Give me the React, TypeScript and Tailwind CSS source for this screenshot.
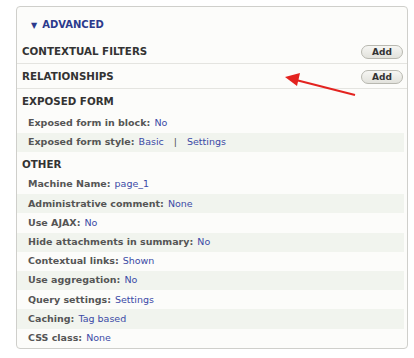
import React from "react";

const font = { fontFamily: '"DejaVu Sans", Verdana, sans-serif' };

type Row = { label: string; value: React.ReactNode };

function Heading({ title, add, border }: { title: string; add?: boolean; border?: boolean }) {
  return (
    <div
      className={`flex items-center justify-between pl-[5px] pr-[4px] pt-[2px] ${border ? "h-[25px] border-b border-[#e4e4e0]" : "h-[24px]"}`}
    >
      <span className="text-[10.3px] font-bold text-[#333]">{title}</span>
      {add && (
        <button className="h-[14px] w-[42px] rounded-full border border-[#b8b8b0] bg-gradient-to-b from-[#f6f6f3] to-[#e2e2dc] text-[9px] font-bold leading-none text-[#333] flex items-center justify-center">
          Add
        </button>
      )}
    </div>
  );
}

function Rows({ rows, h }: { rows: Row[]; h: string }) {
  return (
    <div className="flex flex-col pr-[3px]">
      {rows.map((r, i) => (
        <div
          key={r.label}
          className={`${h} flex items-center pl-[11px] text-[9.5px] ${i % 2 === 1 ? "bg-[#f1f4ee]" : ""}`}
        >
          <span className="font-bold text-[#555]">{r.label}:</span>
          <span className="ml-[4px] text-[#3b4aa6]">{r.value}</span>
        </div>
      ))}
    </div>
  );
}

export default function App() {
  const exposed: Row[] = [
    { label: "Exposed form in block", value: "No" },
    {
      label: "Exposed form style",
      value: (
        <>
          Basic<span className="text-[#555] mx-[10px]">|</span>Settings
        </>
      ),
    },
  ];
  const other: Row[] = [
    { label: "Machine Name", value: "page_1" },
    { label: "Administrative comment", value: "None" },
    { label: "Use AJAX", value: "No" },
    { label: "Hide attachments in summary", value: "No" },
    { label: "Contextual links", value: "Shown" },
    { label: "Use aggregation", value: "No" },
    { label: "Query settings", value: "Settings" },
    { label: "Caching", value: "Tag based" },
    { label: "CSS class", value: "None" },
  ];

  return (
    <div className="w-[414px] h-[358px] bg-white pt-[6px] pl-[16px] pr-[6px] relative" style={font}>
      <div className="h-[343px] rounded-[4px] border border-[#cfcfcb] bg-[#fcfcfa] overflow-hidden flex flex-col">
        <div className="h-[32px] shrink-0 flex items-center pl-[14px] pt-[2px]">
          <span className="text-[10px] font-bold text-[#2c3a8c]">
            <span className="text-[8px] mr-[5px]">▼</span>ADVANCED
          </span>
        </div>
        <Heading title="CONTEXTUAL FILTERS" add border />
        <Heading title="RELATIONSHIPS" add border />
        <Heading title="EXPOSED FORM" />
        <Rows rows={exposed} h="h-[19.5px]" />
        <div className="h-[23px] shrink-0 flex items-center pl-[5px] pt-[2px]">
          <span className="text-[10.3px] font-bold text-[#333]">OTHER</span>
        </div>
        <Rows rows={other} h="h-[19.2px]" />
      </div>
      <svg className="absolute left-0 top-0 pointer-events-none" width="414" height="358">
        <line x1="355" y1="95" x2="296" y2="80" stroke="#e3231f" strokeWidth="2" />
        <polygon points="285,77 300,73 297,86" fill="#e3231f" />
      </svg>
    </div>
  );
}
